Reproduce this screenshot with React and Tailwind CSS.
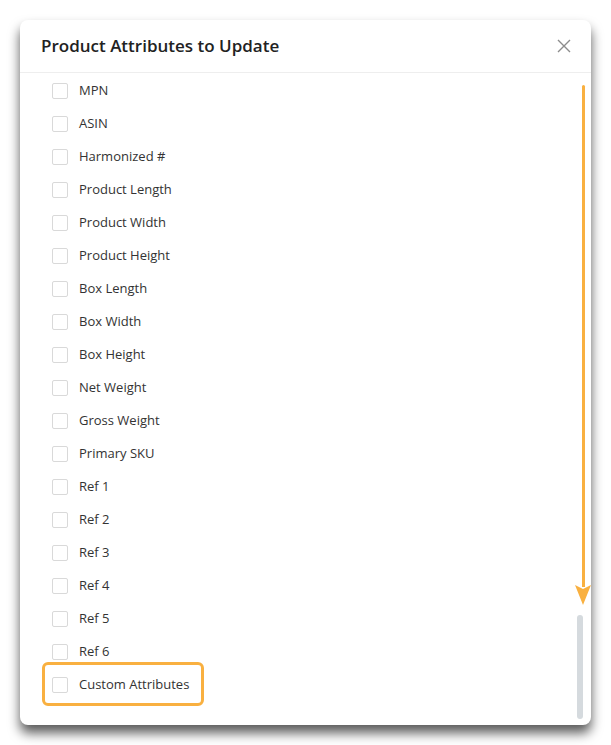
import React from 'react';

const attributes = [
  'MPN',
  'ASIN',
  'Harmonized #',
  'Product Length',
  'Product Width',
  'Product Height',
  'Box Length',
  'Box Width',
  'Box Height',
  'Net Weight',
  'Gross Weight',
  'Primary SKU',
  'Ref 1',
  'Ref 2',
  'Ref 3',
  'Ref 4',
  'Ref 5',
  'Ref 6',
];

const Row = ({ label }) => (
  <label className="flex items-center h-[33px] pl-[32px] gap-[11px] cursor-pointer">
    <span className="w-4 h-4 rounded-[2px] border border-[#d9d9d9] bg-white shrink-0" />
    <span className="text-[13px] text-[#333]">{label}</span>
  </label>
);

const App = () => {
  return (
    <div className="min-h-screen bg-white pt-[20px] px-[20px]" style={{ fontFamily: '"Open Sans", sans-serif' }}>
      <div className="w-[571px] h-[705px] bg-white rounded-lg shadow-[0_8px_12px_rgba(0,0,0,0.65)] flex flex-col overflow-hidden">
        <div className="h-[53px] shrink-0 flex items-center justify-between pl-[21px] pr-[17px] border-b border-[#eeeeee]">
          <h2 className="text-[17px] font-semibold text-[#222]">Product Attributes to Update</h2>
          <button className="w-5 h-5 flex items-center justify-center text-[#8c8c8c]">
            <svg width="14" height="14" viewBox="0 0 14 14" fill="none" stroke="currentColor" strokeWidth="1.4">
              <path d="M1 1L13 13M13 1L1 13" />
            </svg>
          </button>
        </div>

        <div className="flex-1 flex min-h-0">
          <div className="flex-1 pt-[1px]">
            {attributes.map((a) => (
              <Row key={a} label={a} />
            ))}
            <div className="relative">
              <Row label="Custom Attributes" />
              <div className="absolute left-[22px] top-[-6px] w-[162px] h-[44px] border-[3px] border-[#f9b040] rounded-md pointer-events-none" />
            </div>
          </div>

          <div className="relative w-[20px] shrink-0 flex flex-col justify-end pb-[6px] pr-[8px] items-end">
            <div className="w-[6px] h-[104px] rounded-full bg-[#d5dade]" />
            <div className="absolute left-[4px] top-[12px] w-[16px] flex flex-col items-center">
              <div className="w-[3px] h-[502px] bg-[#f9b040] rounded-t-full" />
              <svg width="16" height="20" viewBox="0 0 16 20" className="-mt-[2px]">
                <path d="M0 0 L8 4 L16 0 L8 20 Z" fill="#f9b040" />
              </svg>
            </div>
          </div>
        </div>
      </div>
    </div>
  );
};

export default App;
